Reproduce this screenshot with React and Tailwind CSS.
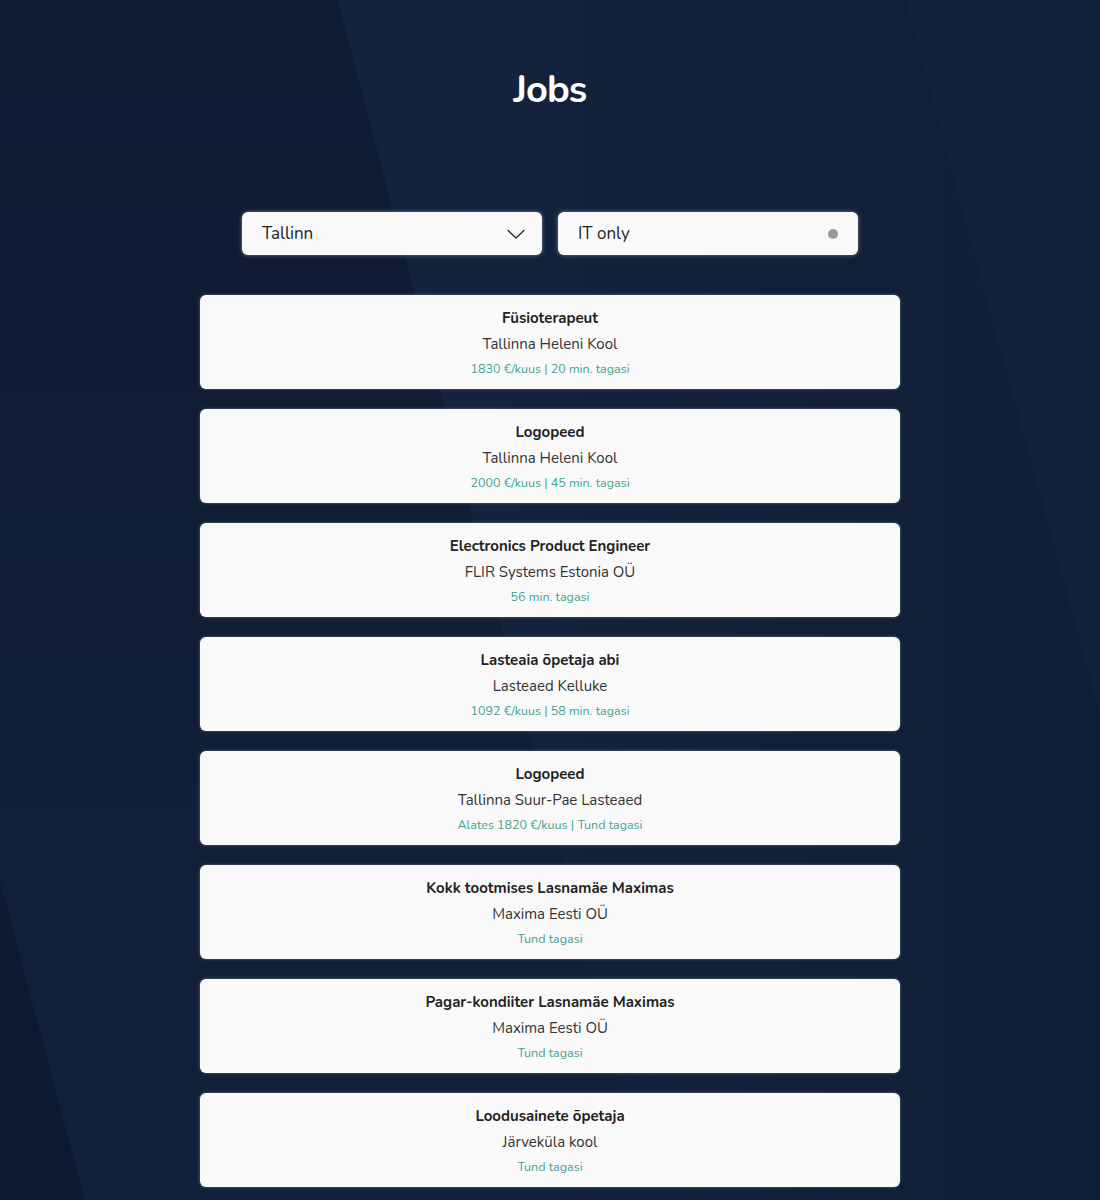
const jobs = [
    { title: 'Füsioterapeut', company: 'Tallinna Heleni Kool', meta: '1830 €/kuus | 20 min. tagasi' },
    { title: 'Logopeed', company: 'Tallinna Heleni Kool', meta: '2000 €/kuus | 45 min. tagasi' },
    { title: 'Electronics Product Engineer', company: 'FLIR Systems Estonia OÜ', meta: '56 min. tagasi' },
    { title: 'Lasteaia õpetaja abi', company: 'Lasteaed Kelluke', meta: '1092 €/kuus | 58 min. tagasi' },
    { title: 'Logopeed', company: 'Tallinna Suur-Pae Lasteaed', meta: 'Alates 1820 €/kuus | Tund tagasi' },
    { title: 'Kokk tootmises Lasnamäe Maximas', company: 'Maxima Eesti OÜ', meta: 'Tund tagasi' },
    { title: 'Pagar-kondiiter Lasnamäe Maximas', company: 'Maxima Eesti OÜ', meta: 'Tund tagasi' },
    { title: 'Loodusainete õpetaja', company: 'Järveküla kool', meta: 'Tund tagasi' },
];

// decorative diagonal background
const Backdrop = () => (
    <svg className="absolute inset-0 w-full h-full" viewBox="0 0 1100 1200" preserveAspectRatio="none">
        <defs>
            <linearGradient id="band" x1="0" y1="0" x2="1" y2="0">
                <stop offset="0" stopColor="#14243f" />
                <stop offset="1" stopColor="#0f1c34" />
            </linearGradient>
            <linearGradient id="base" x1="0" y1="0" x2="0" y2="1">
                <stop offset="0" stopColor="#0e1a30" />
                <stop offset="1" stopColor="#12213b" />
            </linearGradient>
        </defs>
        <rect width="1100" height="1200" fill="url(#base)" />
        <polygon points="338,0 905,0 1241,1200 658,1200" fill="url(#band)" />
        <polygon points="905,0 1100,0 1100,700" fill="#12213c" />
        <polygon points="0,862 92,1200 0,1200" fill="#0d192e" />
    </svg>
);

const Chevron = () => (
    <svg width="18" height="10" viewBox="0 0 18 10" fill="none" stroke="#333" strokeWidth="1.5" strokeLinecap="round" strokeLinejoin="round">
        <path d="M1 1.5 9 9l8-7.5" />
    </svg>
);

const JobCard = ({ job }) => (
    <div className="bg-[#f9f9f9] rounded-md pt-[11px] pb-[10px] text-center shadow-[0_0_3px_rgba(255,255,255,0.35)]">
        <div className="text-[15px] leading-6 font-bold text-[#222]">{job.title}</div>
        <div className="mt-[2px] text-[15px] leading-6 text-[#333]">{job.company}</div>
        <div className="mt-[3px] text-[12.5px] leading-5 text-[#45a293]">{job.meta}</div>
    </div>
);

const App = () => {
    return (
        <div className="relative min-h-[1200px] overflow-hidden font-['Nunito','Lato',sans-serif]">
            <Backdrop />
            <div className="relative flex flex-col items-center pt-[66px] pb-10">
                <h1 className="text-[38px] leading-[48px] font-bold text-white tracking-tight">Jobs</h1>

                {/* Filters */}
                <div className="mt-[98px] flex gap-4">
                    <div className="w-[300px] h-[43px] bg-[#f9f9f9] rounded-md flex items-center justify-between pl-5 pr-[17px] shadow-[0_0_4px_rgba(255,255,255,0.4)]">
                        <span className="text-[17px] text-[#222]">Tallinn</span>
                        <Chevron />
                    </div>
                    <div className="w-[300px] h-[43px] bg-[#f9f9f9] rounded-md flex items-center justify-between pl-5 pr-5 shadow-[0_0_4px_rgba(255,255,255,0.4)]">
                        <span className="text-[17px] text-[#222]">IT only</span>
                        <span className="w-[10px] h-[10px] rounded-full bg-[#9a9a9a]" />
                    </div>
                </div>

                {/* Job list */}
                <div className="mt-10 w-[700px] flex flex-col gap-5">
                    {jobs.map((job, i) => (
                        <JobCard key={i} job={job} />
                    ))}
                </div>
            </div>
        </div>
    );
};

export default App;
